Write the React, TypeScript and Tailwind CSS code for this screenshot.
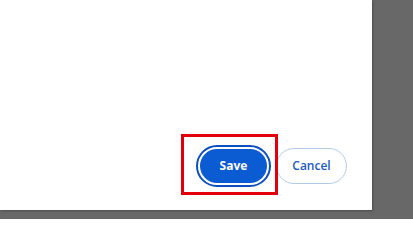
export default function App() {
  return (
    <div className="w-[413px] h-[219px] bg-[#686868] overflow-hidden" style={{ fontFamily: '"Open Sans", "Noto Sans", sans-serif' }}>
      <div className="relative w-[372px] h-[210px] bg-white shadow-[1px_1px_2px_rgba(0,0,0,0.25)] flex items-end justify-end pr-[25px] pb-[23px]">
        <div className="flex items-center gap-[5px]">
          <div className="p-[4px]">
            <button className="w-[67px] h-[34px] rounded-full bg-[#0b5bd3] text-white text-[12px] font-bold outline-2 outline-[#0c4fc1] outline-offset-2 flex items-center justify-center">
              Save
            </button>
          </div>
          <button className="w-[71px] h-[36px] rounded-full bg-white border border-[#b3cbea] text-[#1b5bbd] text-[12px] font-semibold flex items-center justify-center">
            Cancel
          </button>
        </div>
        <div className="absolute left-[181px] top-[134px] w-[97px] h-[61px] border-[3px] border-[#e3000b] pointer-events-none" />
      </div>
    </div>
  );
}
